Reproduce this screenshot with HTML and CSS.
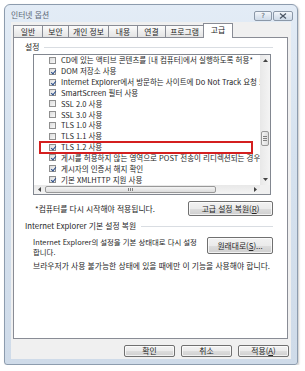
FILE: index.html
```html
<!DOCTYPE html>
<html lang="ko">
<head>
<meta charset="utf-8">
<link rel="stylesheet" href="styles.css">
</head>
<body>
<div class="window">
  <div class="titlebar">
    <span class="title">인터넷 옵션</span>
    <div class="caption-buttons">
      <span class="cbtn help">?</span>
      <span class="cbtn close"><svg width="8" height="6" viewBox="0 0 8 6"><path d="M1 0.5 L7 5.5 M7 0.5 L1 5.5" stroke="#4b5664" stroke-width="1.2" fill="none"/></svg></span>
    </div>
  </div>
  <div class="client">
    <div class="tabs">
      <span class="tab t1">일반</span>
      <span class="tab t2">보안</span>
      <span class="tab t3">개인 정보</span>
      <span class="tab t4">내용</span>
      <span class="tab t5">연결</span>
      <span class="tab t6">프로그램</span>
      <span class="tab active">고급</span>
    </div>
    <div class="panel">
      <div class="group-head">설정</div>
      <div class="listbox">
        <div class="list-view">
          <div class="item"><span class="cb"></span>CD에 있는 액티브 콘텐츠를 [내 컴퓨터]에서 실행하도록 허용*</div>
          <div class="item"><span class="cb on"></span>DOM 저장소 사용</div>
          <div class="item"><span class="cb on"></span>Internet Explorer에서 방문하는 사이트에 Do Not Track 요청 보내기</div>
          <div class="item"><span class="cb on"></span>SmartScreen 필터 사용</div>
          <div class="item"><span class="cb"></span>SSL 2.0 사용</div>
          <div class="item"><span class="cb"></span>SSL 3.0 사용</div>
          <div class="item"><span class="cb"></span>TLS 1.0 사용</div>
          <div class="item"><span class="cb"></span>TLS 1.1 사용</div>
          <div class="item"><span class="cb on"></span>TLS 1.2 사용</div>
          <div class="item"><span class="cb on"></span>게시를 허용하지 않는 영역으로 POST 전송이 리디렉션되는 경우 경고</div>
          <div class="item"><span class="cb on"></span>게시자의 인증서 해지 확인</div>
          <div class="item"><span class="cb on"></span>기본 XMLHTTP 지원 사용</div>
          <div class="highlight"></div>
        </div>
        <div class="vscroll">
          <span class="arrow"><svg width="5" height="3" viewBox="0 0 5 3"><path d="M0 3 L2.5 0 L5 3Z" fill="#444"/></svg></span>
          <span class="vtrack"><span class="vthumb"><i></i><i></i><i></i></span></span>
          <span class="arrow"><svg width="5" height="3" viewBox="0 0 5 3"><path d="M0 0 L2.5 3 L5 0Z" fill="#444"/></svg></span>
        </div>
        <div class="hscroll">
          <span class="arrow"><svg width="3" height="5" viewBox="0 0 3 5"><path d="M3 0 L0 2.5 L3 5Z" fill="#444"/></svg></span>
          <span class="htrack"><span class="hthumb"><i></i><i></i><i></i></span></span>
          <span class="arrow"><svg width="3" height="5" viewBox="0 0 3 5"><path d="M0 0 L3 2.5 L0 5Z" fill="#444"/></svg></span>
        </div>
        <div class="corner"></div>
      </div>
      <div class="row note-row">
        <span class="note">*컴퓨터를 다시 시작해야 적용됩니다.</span>
        <span class="btn wide">고급 설정 복원(<u>R</u>)</span>
      </div>
      <div class="group-head g2">Internet Explorer 기본 설정 복원</div>
      <div class="row reset-row">
        <span class="desc">Internet Explorer의 설정을 기본 상태대로 다시 설정<br>합니다.</span>
        <span class="btn reset">원래대로(<u>S</u>)...</span>
      </div>
      <p class="warn">브라우저가 사용 불가능한 상태에 있을 때에만 이 기능을 사용해야 합니다.</p>
    </div>
    <div class="buttons">
      <span class="btn">확인</span>
      <span class="btn">취소</span>
      <span class="btn">적용(<u>A</u>)</span>
    </div>
  </div>
</div>
</body>
</html>
```
FILE: styles.css
```css
* { box-sizing: border-box; }
html, body { margin: 0; background: #ffffff; }
body {
  font-family: "Noto Sans CJK KR", "Noto Sans", sans-serif;
  font-size: 7.8px;
  line-height: 10px;
  color: #262626;
}
.window {
  margin: 4px 0 0 4px;
  width: 294px;
  height: 361px;
  border: 1px solid #8d9cae;
  border-radius: 6px 6px 3px 3px;
  background: linear-gradient(180deg, #e3ecf6 0%, #d6e2ef 40%, #cfdbe9 100%);
  box-shadow: 1px 1px 2px rgba(0,0,0,0.22);
  display: flex;
  flex-direction: column;
  padding: 0 6px 5px 6px;
}
.titlebar {
  height: 17px;
  display: flex;
  justify-content: space-between;
  align-items: flex-start;
}
.title {
  margin-top: 5px;
  color: #5d6875;
}
.caption-buttons {
  display: flex;
  gap: 1px;
  margin-top: 6px;
  margin-right: -2px;
}
.cbtn {
  height: 10px;
  border: 1px solid #8b98a8;
  border-radius: 2px;
  background: linear-gradient(180deg, #f4f7fb 0%, #dfe7f1 50%, #cfdbe8 100%);
  display: flex;
  align-items: center;
  justify-content: center;
  font-size: 7px;
  font-family: "DejaVu Sans", sans-serif;
  color: #4b5664;
  line-height: 8px;
}
.help { width: 18px; }
.close { width: 20px; }
.client {
  flex: 1;
  background: #f0f0f0;
  padding: 1px 3px 0 2px;
  display: flex;
  flex-direction: column;
}
.tabs {
  display: flex;
  align-items: flex-end;
  height: 15px;
  margin-bottom: -1px;
  position: relative;
  z-index: 1;
}
.tab {
  height: 12px;
  margin-bottom: 1px;
  border: 1px solid #898c95;
  border-bottom: none;
  border-right: none;
  background: linear-gradient(180deg, #fbfbfb 0%, #efefef 50%, #e4e4e4 100%);
  padding: 0 2px;
  line-height: 11px;
  text-align: center;
  white-space: nowrap;
}
.t1 { width: 29px; }
.t2 { width: 26px; }
.t3 { width: 40px; }
.t4 { width: 29px; }
.t5 { width: 28px; }
.t6 { width: 38px; }
.tab.active {
  width: 30px;
  height: 15px;
  margin-bottom: 0;
  background: #ffffff;
  border-right: 1px solid #898c95;
  line-height: 12px;
}
.panel {
  height: 302px;
  background: #ffffff;
  border: 1px solid #898c95;
  padding: 4px 14px 0 11px;
  display: flex;
  flex-direction: column;
}
.group-head {
  display: flex;
  align-items: center;
  height: 10px;
  white-space: nowrap;
}
.group-head::after {
  content: "";
  flex: 1;
  height: 1px;
  margin-left: 5px;
  background: #d9dde2;
}
.g2 { margin-top: 5px; }
.listbox {
  margin: 2px 2px 0 8px;
  height: 141px;
  border: 1px solid #828790;
  display: grid;
  grid-template-columns: 1fr 10px;
  grid-template-rows: 1fr 9px;
  background: #ffffff;
}
.list-view {
  position: relative;
  overflow: hidden;
  padding-left: 15px;
}
.item {
  height: 10.83px;
  display: flex;
  align-items: center;
  white-space: nowrap;
  font-size: 7.5px;
}
.cb {
  flex: none;
  width: 7px;
  height: 7px;
  margin-right: 5px;
  border: 1px solid #8f8f8f;
  background: linear-gradient(135deg, #dcdcdc 0%, #f8f8f8 100%);
  position: relative;
}
.cb.on::after {
  content: "";
  position: absolute;
  left: 1.5px;
  top: 0px;
  width: 2px;
  height: 4px;
  border: solid #2a4d8a;
  border-width: 0 1.2px 1.2px 0;
  transform: rotate(40deg);
}
.highlight {
  position: absolute;
  left: 5px;
  top: 86px;
  width: 214px;
  height: 13px;
  border: 2px solid #d41f1f;
}
.vscroll {
  background: linear-gradient(90deg, #e8e8e8, #f4f4f4);
  display: flex;
  flex-direction: column;
}
.vscroll .arrow, .hscroll .arrow {
  flex: none;
  display: flex;
  align-items: center;
  justify-content: center;
}
.vscroll .arrow { height: 11px; }
.hscroll .arrow { width: 10px; }
.vtrack { flex: 1; display: flex; flex-direction: column; justify-content: flex-end; padding-bottom: 28px; }
.vthumb {
  height: 15px;
  margin: 0 1px;
  border: 1px solid #989898;
  border-radius: 2px;
  background: linear-gradient(90deg, #f4f4f4, #dcdcdc);
  display: flex;
  flex-direction: column;
  align-items: center;
  justify-content: center;
  gap: 1px;
}
.vthumb i { display: block; width: 4px; height: 1px; background: #808080; }
.hscroll {
  background: linear-gradient(180deg, #e8e8e8, #f4f4f4);
  display: flex;
}
.htrack { flex: 1; display: flex; padding: 0 34px 0 1px; }
.hthumb {
  flex: 1;
  margin: 1px 0;
  border: 1px solid #989898;
  border-radius: 2px;
  background: linear-gradient(180deg, #f4f4f4, #dcdcdc);
  display: flex;
  align-items: center;
  justify-content: center;
  gap: 1px;
}
.hthumb i { display: block; width: 1px; height: 3px; background: #808080; }
.corner { background: #f0f0f0; }
.row {
  display: flex;
  justify-content: space-between;
}
.note-row {
  margin-top: 6px;
  padding-left: 10px;
  align-items: center;
}
.btn {
  display: flex;
  align-items: center;
  justify-content: center;
  height: 12px;
  border: 1px solid #707070;
  border-radius: 2px;
  background: linear-gradient(180deg, #f2f2f2 0%, #ebebeb 50%, #dddddd 51%, #cfcfcf 100%);
  box-shadow: inset 0 0 0 1px rgba(255,255,255,0.7);
  white-space: nowrap;
}
.btn.wide { width: 85px; height: 15px; }
.reset-row { margin-top: 6px; padding-left: 8px; align-items: flex-start; }
.desc { line-height: 10px; font-size: 7.4px; }
.btn.reset { width: 66px; height: 17px; }
.warn { margin: 4px 0 0 8px; white-space: nowrap; }
.buttons {
  display: flex;
  justify-content: flex-end;
  gap: 6px;
  margin-top: 6px;
  margin-right: -1px;
}
.buttons .btn { width: 51px; height: 12px; }
```
